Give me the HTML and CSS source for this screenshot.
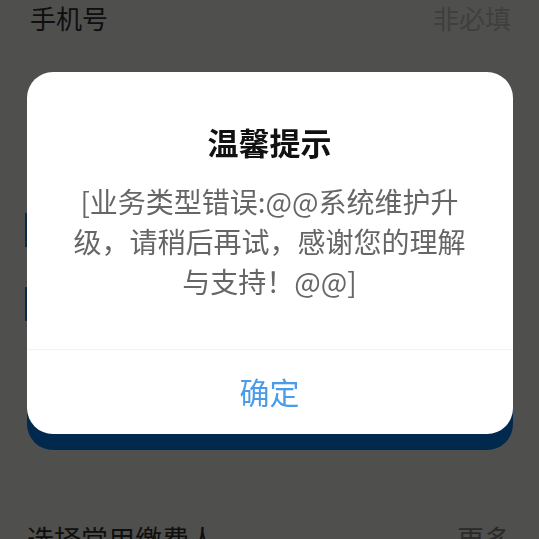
FILE: index.html
```html
<!DOCTYPE html>
<html lang="zh-CN">
<head>
  <meta charset="UTF-8">
  <meta name="viewport" content="width=device-width, initial-scale=1.0">
  <title>缴费</title>
  <link rel="stylesheet" href="styles.css">
</head>
<body>
  <!-- Page under the dialog -->
  <div class="page">
    <div class="row">
      <span class="label">手机号</span>
      <span class="hint">非必填</span>
    </div>
    <div class="options">
      <div class="option"></div>
      <div class="option"></div>
    </div>
    <button class="submit"></button>
    <div class="row row-bottom">
      <span class="label">选择常用缴费人</span>
      <span class="more">更多</span>
    </div>
  </div>

  <!-- Alert dialog -->
  <div class="mask">
    <div class="dialog">
      <div class="dialog-title">温馨提示</div>
      <div class="dialog-msg">[业务类型错误:@@系统维护升级，请稍后再试，感谢您的理解与支持！@@]</div>
      <div class="dialog-btn">确定</div>
    </div>
  </div>
</body>
</html>
```

FILE: styles.css
```css
body {
  margin: 0;
  font-family: "Noto Sans CJK SC", "Noto Sans", sans-serif;
  background-color: #fdfff8;
  overflow: hidden;
}

.page {
  height: 539px;
}

.row {
  display: flex;
  justify-content: space-between;
  align-items: center;
  height: 34px;
  padding: 0 28px 0 30px;
  font-size: 26px;
}
.label {
  color: #333;
}
.hint {
  color: #ccc;
}
.more {
  color: #888;
}

.options {
  display: flex;
  flex-direction: column;
  gap: 40px;
  padding: 179px 0 0 25px;
}
.option {
  height: 34px;
  margin-right: 25px;
  border-left: 3px solid #2087e8;
}

.submit {
  display: block;
  width: 486px;
  height: 60px;
  margin: 69px auto 0;
  border: none;
  border-radius: 26px;
  background-color: #0084f8;
}

.row-bottom {
  margin-top: 70px;
  height: 36px;
  font-size: 27px;
  padding-left: 27px;
}

/* Mask + dialog */
.mask {
  position: fixed;
  top: 0;
  left: 0;
  right: 0;
  bottom: 0;
  background-color: rgba(0, 0, 0, 0.69);
  display: flex;
  justify-content: center;
  align-items: flex-start;
  padding-top: 72px;
}

.dialog {
  width: 486px;
  background-color: #fff;
  border-radius: 26px;
  text-align: center;
  overflow: hidden;
}

.dialog-title {
  padding-top: 49px;
  font-size: 31px;
  line-height: 42px;
  font-weight: bold;
  color: #111;
}

.dialog-msg {
  margin-top: 18px;
  padding: 0 45px 48px;
  font-size: 28px;
  line-height: 40px;
  color: #666;
  border-bottom: 1px solid #f3f3f3;
}

.dialog-btn {
  height: 84px;
  line-height: 82px;
  font-size: 30px;
  color: #4a9be8;
}
```
